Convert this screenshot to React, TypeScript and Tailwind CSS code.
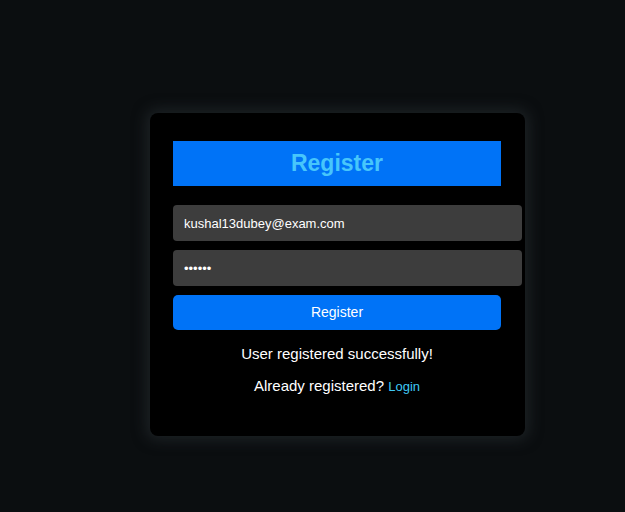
import React from "react";

const App = () => {
  return (
    <div className="min-h-screen w-full bg-[#0b0e10] font-['Liberation_Sans',Arial,sans-serif]">
      <div className="flex justify-center pt-[113px]">
        <div className="ml-[50px] w-[375px] h-[323px] rounded-lg bg-black px-[23px] pt-[28px] shadow-[0_0_14px_4px_rgba(40,46,50,0.6)]">
          {/* Header */}
          <div className="w-[328px] h-[45px] bg-[#0073f7] flex items-center justify-center">
            <h2 className="text-[23px] font-bold text-[#47c6fb]">Register</h2>
          </div>

          <form className="mt-[19px] flex flex-col" onSubmit={(e) => e.preventDefault()}>
            <input
              type="email"
              defaultValue="kushal13dubey@exam.com"
              className="w-[349px] h-[36px] rounded-[4px] bg-[#3d3d3d] px-[11px] text-[13px] text-white outline-none"
            />
            <input
              type="password"
              defaultValue="123456"
              className="mt-[9px] w-[349px] h-[36px] rounded-[4px] bg-[#3d3d3d] px-[11px] text-[13px] text-white outline-none"
            />
            <button
              type="submit"
              className="mt-[9px] w-[328px] h-[35px] rounded-[5px] bg-[#0073f7] text-[14px] text-white"
            >
              Register
            </button>
          </form>

          <p className="w-[328px] mt-[15px] text-center text-[15px] leading-[18px] text-white">
            User registered successfully!
          </p>
          <p className="w-[328px] mt-[14px] text-center text-[15px] leading-[18px] text-white">
            Already registered?{" "}
            <a href="#" className="text-[13px] text-[#3fc8f5]">
              Login
            </a>
          </p>
        </div>
      </div>
    </div>
  );
};

export default App;
